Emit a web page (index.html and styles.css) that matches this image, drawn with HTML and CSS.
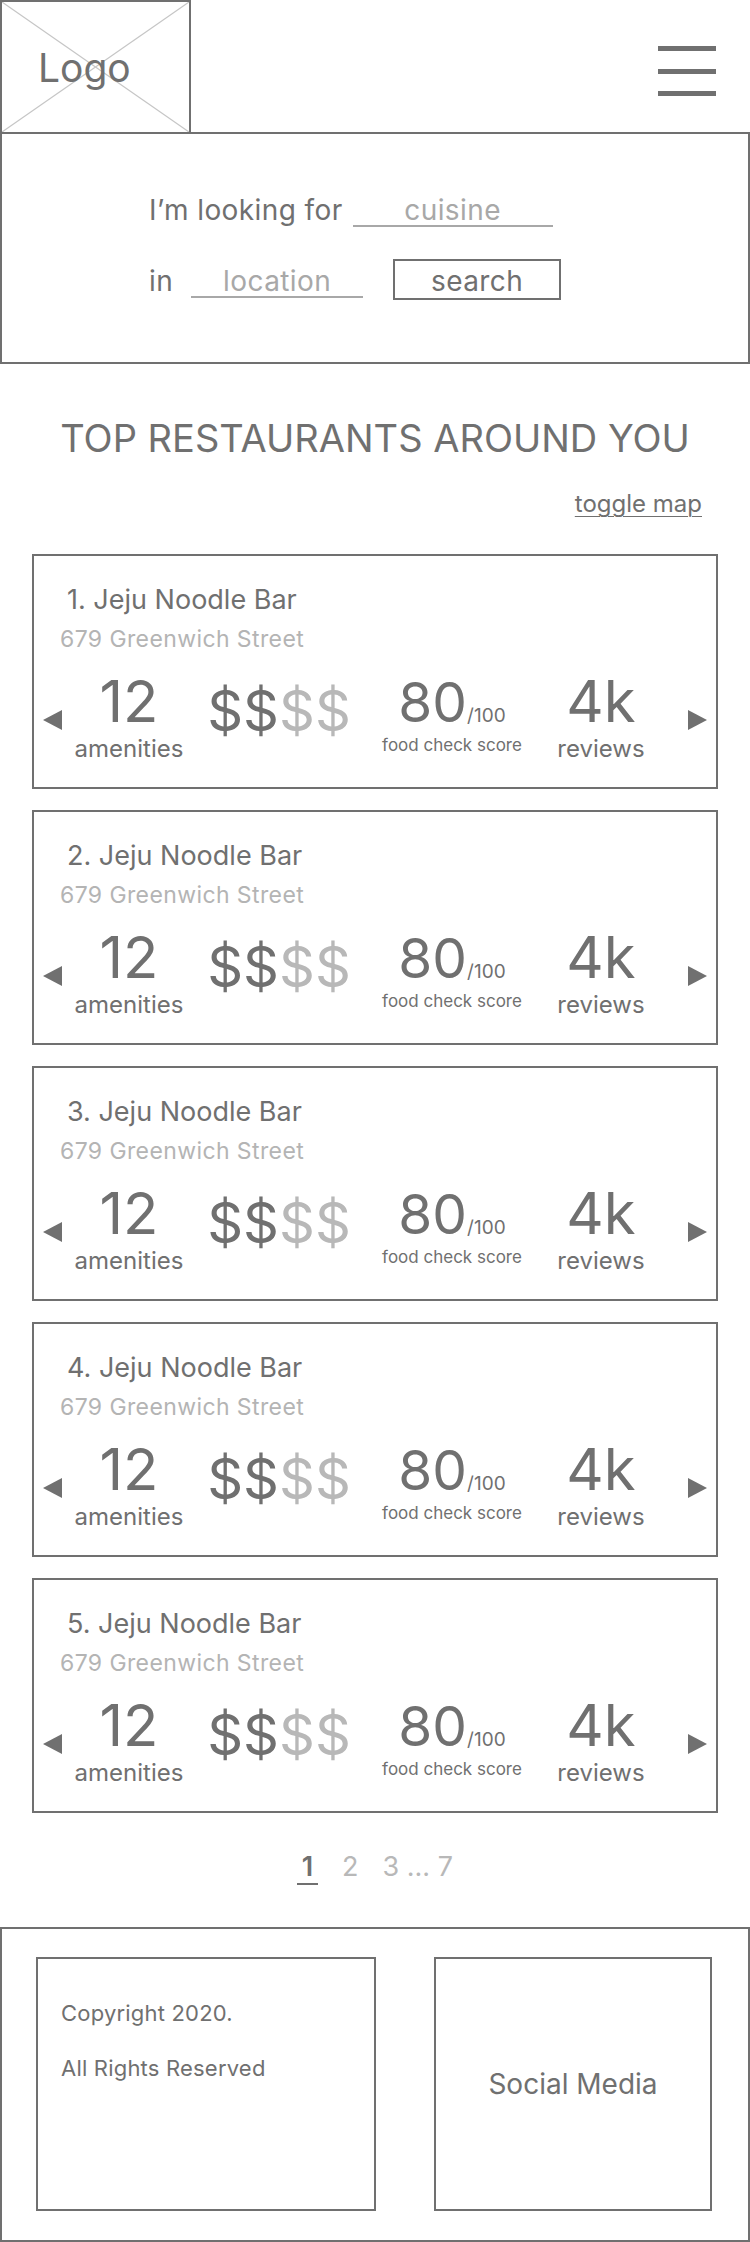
FILE: index.html
```html
<!DOCTYPE html>
<html lang="en">
<head>
<meta charset="utf-8">
<title>Top Restaurants</title>
<link rel="stylesheet" href="styles.css">
</head>
<body>
<header class="topbar">
  <div class="logo">
    <svg class="logo-x" viewBox="0 0 100 100" preserveAspectRatio="none"><line x1="0" y1="0" x2="100" y2="100"/><line x1="100" y1="0" x2="0" y2="100"/></svg>
    <span class="logo-text">Logo</span>
  </div>
  <div class="menu"><span></span><span></span><span></span></div>
</header>

<section class="search">
  <div class="search-row">
    <span class="label">I’m looking for</span>
    <span class="field field-cuisine">cuisine</span>
  </div>
  <div class="search-row">
    <span class="label">in</span>
    <span class="field field-location">location</span>
    <span class="search-btn">search</span>
  </div>
</section>

<h1 class="title">TOP RESTAURANTS AROUND YOU</h1>
<div class="toggle"><a href="#">toggle map</a></div>

<div class="cards">
  <div class="card">
    <div class="name">1. Jeju Noodle Bar</div>
    <div class="addr">679 Greenwich Street</div>
    <div class="stats">
      <svg class="tri tri-l" viewBox="0 0 19 20"><polygon points="19,0 19,20 0,10"/></svg>
      <div class="stat"><div class="num">12</div><div class="lbl">amenities</div></div>
      <div class="price">$$<span class="off">$$</span></div>
      <div class="stat score"><div class="num">80<small>/100</small></div><div class="lbl">food check score</div></div>
      <div class="stat"><div class="num">4k</div><div class="lbl">reviews</div></div>
      <svg class="tri tri-r" viewBox="0 0 19 20"><polygon points="0,0 0,20 19,10"/></svg>
    </div>
  </div>
  <div class="card">
    <div class="name">2. Jeju Noodle Bar</div>
    <div class="addr">679 Greenwich Street</div>
    <div class="stats">
      <svg class="tri tri-l" viewBox="0 0 19 20"><polygon points="19,0 19,20 0,10"/></svg>
      <div class="stat"><div class="num">12</div><div class="lbl">amenities</div></div>
      <div class="price">$$<span class="off">$$</span></div>
      <div class="stat score"><div class="num">80<small>/100</small></div><div class="lbl">food check score</div></div>
      <div class="stat"><div class="num">4k</div><div class="lbl">reviews</div></div>
      <svg class="tri tri-r" viewBox="0 0 19 20"><polygon points="0,0 0,20 19,10"/></svg>
    </div>
  </div>
  <div class="card">
    <div class="name">3. Jeju Noodle Bar</div>
    <div class="addr">679 Greenwich Street</div>
    <div class="stats">
      <svg class="tri tri-l" viewBox="0 0 19 20"><polygon points="19,0 19,20 0,10"/></svg>
      <div class="stat"><div class="num">12</div><div class="lbl">amenities</div></div>
      <div class="price">$$<span class="off">$$</span></div>
      <div class="stat score"><div class="num">80<small>/100</small></div><div class="lbl">food check score</div></div>
      <div class="stat"><div class="num">4k</div><div class="lbl">reviews</div></div>
      <svg class="tri tri-r" viewBox="0 0 19 20"><polygon points="0,0 0,20 19,10"/></svg>
    </div>
  </div>
  <div class="card">
    <div class="name">4. Jeju Noodle Bar</div>
    <div class="addr">679 Greenwich Street</div>
    <div class="stats">
      <svg class="tri tri-l" viewBox="0 0 19 20"><polygon points="19,0 19,20 0,10"/></svg>
      <div class="stat"><div class="num">12</div><div class="lbl">amenities</div></div>
      <div class="price">$$<span class="off">$$</span></div>
      <div class="stat score"><div class="num">80<small>/100</small></div><div class="lbl">food check score</div></div>
      <div class="stat"><div class="num">4k</div><div class="lbl">reviews</div></div>
      <svg class="tri tri-r" viewBox="0 0 19 20"><polygon points="0,0 0,20 19,10"/></svg>
    </div>
  </div>
  <div class="card">
    <div class="name">5. Jeju Noodle Bar</div>
    <div class="addr">679 Greenwich Street</div>
    <div class="stats">
      <svg class="tri tri-l" viewBox="0 0 19 20"><polygon points="19,0 19,20 0,10"/></svg>
      <div class="stat"><div class="num">12</div><div class="lbl">amenities</div></div>
      <div class="price">$$<span class="off">$$</span></div>
      <div class="stat score"><div class="num">80<small>/100</small></div><div class="lbl">food check score</div></div>
      <div class="stat"><div class="num">4k</div><div class="lbl">reviews</div></div>
      <svg class="tri tri-r" viewBox="0 0 19 20"><polygon points="0,0 0,20 19,10"/></svg>
    </div>
  </div>
</div>

<nav class="pager">
  <span class="cur">1</span>
  <span>2</span>
  <span>3 ... 7</span>
</nav>

<footer class="footer">
  <div class="copy">
    <p>Copyright 2020.</p>
    <p>All Rights Reserved</p>
  </div>
  <div class="social">Social Media</div>
</footer>
</body>
</html>
```
FILE: styles.css
```css
* { box-sizing: border-box; }

body {
  margin: 0;
  width: 750px;
  background: #fff;
  color: #707070;
  font-family: Inter, "Liberation Sans", sans-serif;
}

/* header */
.topbar {
  display: flex;
  justify-content: space-between;
  align-items: flex-start;
  height: 132px;
}
.logo {
  position: relative;
  width: 191px;
  height: 132px;
  border: 2px solid #707070;
  border-bottom: none;
  display: flex;
  align-items: center;
  padding-left: 36px;
}
.logo-x {
  position: absolute;
  left: 0; top: 0;
  width: 100%;
  height: 100%;
}
.logo-x line {
  stroke: #c6c6c6;
  stroke-width: 1.2;
  vector-effect: non-scaling-stroke;
}
.logo-text {
  position: relative;
  font-size: 39px;
  line-height: 1;
}
.menu {
  margin: 46px 34px 0 0;
  width: 58px;
  display: flex;
  flex-direction: column;
  gap: 17.5px;
}
.menu span {
  height: 5px;
  background: #707070;
}

/* search panel */
.search {
  height: 232px;
  border: 2px solid #707070;
  padding: 59px 0 0 147px;
}
.search-row {
  display: flex;
  align-items: baseline;
  font-size: 28px;
  letter-spacing: 0.4px;
}
.search-row + .search-row { margin-top: 32px; }
.label { line-height: 34px; }
.field {
  line-height: 30px;
  border-bottom: 2px solid #a8a8a8;
  color: #a8a8a8;
  text-align: center;
}
.field-cuisine { width: 200px; margin-left: 10px; }
.field-location { width: 172px; margin-left: 18px; }
.search-btn {
  margin-left: 30px;
  width: 168px;
  border: 2px solid #707070;
  padding-top: 4px;
  line-height: 33px;
  text-align: center;
}

/* heading */
.title {
  margin: 52px 0 0;
  font-size: 38px;
  font-weight: 400;
  line-height: 45px;
  text-align: center;
}
.toggle {
  margin-top: 28px;
  padding-right: 48px;
  text-align: right;
  font-size: 24px;
  line-height: 29px;
}
.toggle a {
  color: inherit;
  text-decoration: underline;
  text-underline-offset: 4px;
  text-decoration-thickness: 1px;
}

/* cards */
.cards {
  margin: 36px 32px 0;
  display: flex;
  flex-direction: column;
  gap: 21px;
}
.card {
  border: 2px solid #707070;
  padding: 28px 0 24px;
}
.name {
  padding-left: 33px;
  font-size: 27px;
  line-height: 32px;
}
.addr {
  margin-top: 10px;
  padding-left: 26px;
  font-size: 23px;
  line-height: 27px;
  letter-spacing: 0.4px;
  color: #b4b4b4;
}
.stats {
  margin-top: 17px;
  display: grid;
  grid-template-columns: 36px 118px 182px 164px 134px 48px;
  align-items: start;
}
.tri {
  width: 19px;
  height: 20px;
  margin-top: 40px;
  fill: #707070;
}
.tri-l { margin-left: 9px; }
.tri-r { justify-self: end; margin-right: 9px; }
.stat { text-align: center; }
.num {
  font-size: 58px;
  line-height: 62px;
}
.lbl {
  margin-top: 2px;
  font-size: 24px;
  line-height: 29px;
}
.price {
  padding-top: 10px;
  font-size: 56px;
  line-height: 62px;
  text-align: center;
}
.price .off { color: #b8b8b8; }
.score .num {
  padding-top: 2px;
  font-size: 55px;
  line-height: 60px;
}
.score .num small {
  font-size: 19px;
  line-height: 0;
}
.score .lbl {
  margin-top: 3px;
  font-size: 17px;
  line-height: 21px;
}

/* pagination */
.pager {
  margin-top: 38px;
  display: flex;
  justify-content: center;
  align-items: baseline;
  gap: 24px;
  font-size: 27px;
  line-height: 32px;
  color: #b8b8b8;
}
.pager .cur {
  width: 21px;
  text-align: center;
  color: #707070;
  font-weight: 600;
  border-bottom: 2px solid #707070;
}

/* footer */
.footer {
  margin-top: 42px;
  height: 315px;
  border: 2px solid #707070;
  padding: 28px 36px 29px 34px;
  display: flex;
  gap: 58px;
}
.copy {
  width: 340px;
  border: 2px solid #707070;
  padding: 41px 0 0 23px;
  font-size: 22px;
  line-height: 27px;
  letter-spacing: 0.2px;
}
.copy p { margin: 0; }
.copy p + p { margin-top: 28px; }
.social {
  width: 278px;
  border: 2px solid #707070;
  display: flex;
  align-items: center;
  justify-content: center;
  font-size: 28px;
}
```
